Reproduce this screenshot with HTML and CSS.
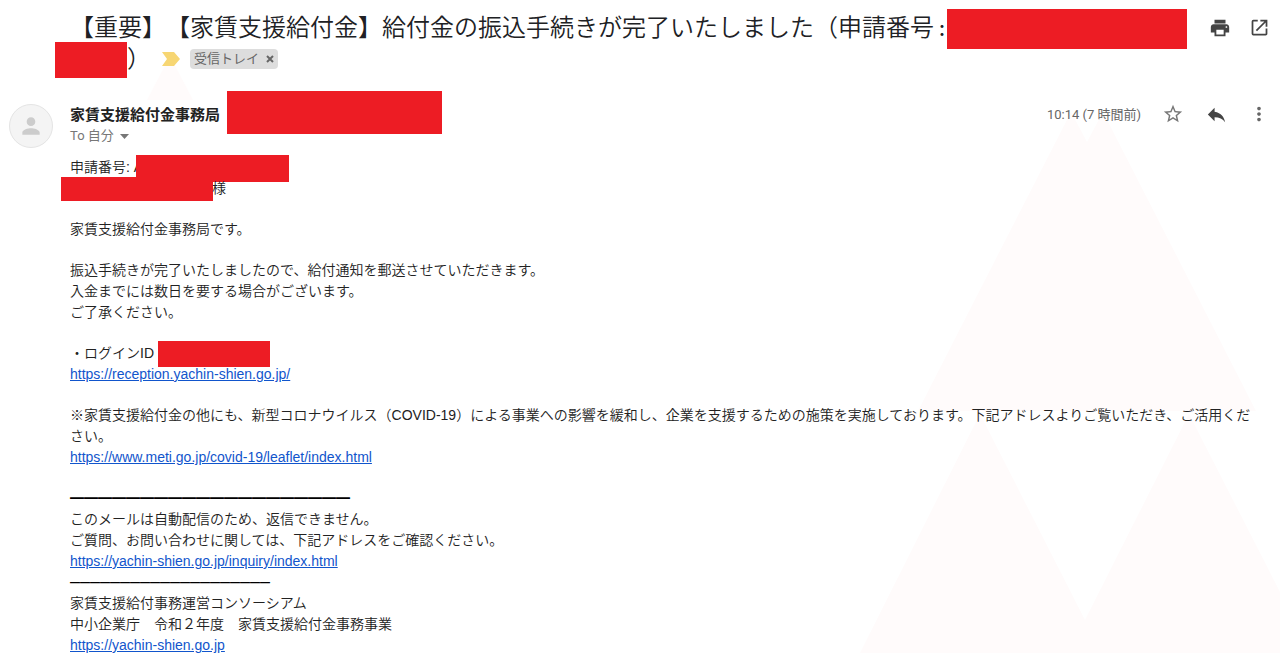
FILE: index.html
```html
<!DOCTYPE html>
<html lang="ja">
<head>
<meta charset="utf-8">
<meta name="viewport" content="width=device-width, initial-scale=1">
<title>【重要】【家賃支援給付金】給付金の振込手続きが完了いたしました</title>
<link rel="stylesheet" href="styles.css">
</head>
<body>
<main class="mail">
  <svg class="watermark" width="420" height="541" viewBox="0 0 420 541" aria-hidden="true">
    <path d="M211 0l16 30 16-30 153 299H58zM120 302l105 206 104-206 91 178v61H0z"/>
  </svg>

  <header class="subject">
    <h1 class="subject-text">【重要】【家賃支援給付金】給付金の振込手続きが完了いたしました（申請番号<span class="colon">：</span><span class="mask mask-number"></span><br><span class="mask mask-number-end"></span>）</h1>
    <div class="labels">
      <span class="marker">
        <svg width="18" height="14" viewBox="0 0 18 14" aria-hidden="true"><path d="M0 0h12l6 7-6 7H0l5-7z"/></svg>
        <svg class="peak" width="46" height="44" viewBox="0 0 46 44" aria-hidden="true"><path d="M23 0l23 44H0z"/></svg>
      </span>
      <span class="chip"><a href="#inbox">受信トレイ</a><button type="button" aria-label="ラベルを削除"><svg width="8" height="8" viewBox="0 0 8 8"><path d="M1 1l6 6M7 1L1 7"/></svg></button></span>
    </div>
    <div class="tools">
      <button class="icon" type="button" aria-label="印刷"><svg width="22" height="22" viewBox="0 0 24 24"><path d="M19 8H5c-1.660 0-3 1.340-3 3v6h4v4h12v-4h4v-6c0-1.660-1.340-3-3-3zm-3 11H8v-5h8v5zm3-7c-.55 0-1-.45-1-1s.45-1 1-1 1 .45 1 1-.45 1-1 1zm-1-9H6v4h12V3z"/></svg></button>
      <button class="icon" type="button" aria-label="新しいウィンドウで開く"><svg width="21" height="21" viewBox="0 0 24 24"><path d="M19 19H5V5h5V3H5a2 2 0 0 0-2 2v14a2 2 0 0 0 2 2h14c1.100 0 2-.9 2-2v-6h-2v6zM13 3v2h4.590l-9.830 9.830 1.410 1.410L19 6.410V11h2V3h-8z"/></svg></button>
    </div>
  </header>

  <article class="message">
    <div class="avatar"><svg width="26" height="26" viewBox="0 0 24 24" aria-hidden="true"><path d="M12 12c2.210 0 4-1.790 4-4s-1.790-4-4-4-4 1.790-4 4 1.790 4 4 4zm0 2c-2.670 0-8 1.340-8 4v2h16v-2c0-2.660-5.330-4-8-4z"/></svg></div>
    <div class="content">
      <div class="sender-row">
        <h2 class="sender">家賃支援給付金事務局</h2>
        <span class="mask mask-address"></span>
        <time class="time">10:14 (7 時間前)</time>
        <div class="tools">
          <button class="icon star" type="button" aria-label="スター"><svg width="22" height="22" viewBox="0 0 24 24"><path d="M22 9.240l-7.190-.62L12 2 9.190 8.630 2 9.240l5.460 4.730L5.820 21 12 17.270 18.180 21l-1.630-7.030L22 9.240zM12 15.400l-3.760 2.270 1-4.280-3.320-2.880 4.380-.38L12 6.100l1.710 4.040 4.380.38-3.320 2.880 1 4.280L12 15.400z"/></svg></button>
          <button class="icon" type="button" aria-label="返信"><svg width="23" height="23" viewBox="0 0 24 24"><path d="M10 9V5l-7 7 7 7v-4.100c5 0 8.500 1.600 11 5.100-1-5-4-10-11-11z"/></svg></button>
          <button class="icon more" type="button" aria-label="その他"><svg width="22" height="22" viewBox="0 0 24 24"><path d="M12 8c1.100 0 2-.9 2-2s-.9-2-2-2-2 .9-2 2 .9 2 2 2zm0 2c-1.100 0-2 .9-2 2s.9 2 2 2 2-.9 2-2-.9-2-2-2zm0 6c-1.100 0-2 .9-2 2s.9 2 2 2 2-.9 2-2-.9-2-2-2z"/></svg></button>
        </div>
      </div>
      <button class="recipient" type="button">To 自分<svg width="9" height="5" viewBox="0 0 9 5" aria-hidden="true"><path d="M0 0h9L4.500 5z"/></svg></button>

      <div class="body">
        <p>申請番号: A<span class="mask mask-id"></span><br><span class="mask mask-name"></span>様</p>
        <p>家賃支援給付金事務局です。</p>
        <p>振込手続きが完了いたしましたので、給付通知を郵送させていただきます。<br>入金までには数日を要する場合がございます。<br>ご了承ください。</p>
        <p>・ログインID <span class="mask mask-login"></span><br><a href="https://reception.yachin-shien.go.jp/">https://reception.yachin-shien.go.jp/</a></p>
        <p>※家賃支援給付金の他にも、新型コロナウイルス（COVID-19）による事業への影響を緩和し、企業を支援するための施策を実施しております。下記アドレスよりご覧いただき、ご活用ください。<br><a href="https://www.meti.go.jp/covid-19/leaflet/index.html">https://www.meti.go.jp/covid-19/leaflet/index.html</a></p>
        <p><span class="rule">━━━━━━━━━━━━━━━━━━━━</span><br>このメールは自動配信のため、返信できません。<br>ご質問、お問い合わせに関しては、下記アドレスをご確認ください。<br><a href="https://yachin-shien.go.jp/inquiry/index.html">https://yachin-shien.go.jp/inquiry/index.html</a><br><span class="rule rule-short">━━━━━━━━━━━━━━━━━━━━</span><br>家賃支援給付事務運営コンソーシアム<br>中小企業庁　令和２年度　家賃支援給付金事務事業<br><a href="https://yachin-shien.go.jp">https://yachin-shien.go.jp</a></p>
      </div>
    </div>
  </article>
</main>
</body>
</html>
```

FILE: styles.css
```css
* {
  box-sizing: border-box;
}

body {
  margin: 0;
  background: #fff;
  color: #222;
  font-family: "Liberation Sans", "Noto Sans CJK JP", sans-serif;
  font-size: 14px;
  line-height: 21px;
  text-spacing-trim: space-all;
}

h1,
h2,
p {
  margin: 0;
}

button {
  padding: 0;
  border: 0;
  background: none;
  color: inherit;
  font: inherit;
  cursor: pointer;
}

svg {
  display: block;
  fill: currentColor;
}

.mail {
  position: relative;
  overflow: hidden;
  padding: 12px 10px 0;
}

.watermark {
  position: absolute;
  z-index: -1;
  top: 112px;
  right: 0;
  color: #fffbfb;
}

.mask {
  display: inline-block;
  flex: none;
  vertical-align: middle;
  background: #ed1c24;
}

/* Subject */
.subject {
  display: grid;
  grid-template-columns: auto 1fr auto;
  grid-template-rows: 31px 31px;
  padding-left: 60px;
}

.subject-text {
  grid-area: 1 / 1 / 3 / 3;
  margin-top: -2px;
  color: #202124;
  font-family: "Noto Sans CJK JP", sans-serif;
  font-size: 24px;
  font-weight: 350;
  line-height: 31px;
}

.colon {
  font-size: 16px;
  font-weight: 700;
  line-height: 16px;
}

.mask-number {
  width: 240px;
  height: 40px;
  margin: -12px 0 -12px -3px;
}

.mask-number-end {
  width: 72px;
  height: 36px;
  margin: -10px 0 -10px -15px;
}

.labels {
  grid-area: 2 / 1 / 3 / 3;
  display: flex;
  align-items: center;
  gap: 10px;
  height: 31px;
  margin-left: 92px;
}

.marker {
  position: relative;
  color: #f7d673;
}

.peak {
  position: absolute;
  z-index: -1;
  top: 4px;
  left: -15px;
  color: #fffbfb;
}

.chip {
  display: flex;
  align-items: center;
  gap: 7px;
  height: 20px;
  padding: 0 4px;
  border-radius: 4px;
  background: #ddd;
  color: #666;
  font-size: 13px;
  line-height: 20px;
}

.chip a {
  color: inherit;
  text-decoration: none;
}

.chip path {
  fill: none;
  stroke: currentColor;
  stroke-width: 2;
}

.tools {
  display: flex;
  flex: none;
  gap: 19px;
}

.subject .tools {
  grid-area: 1 / 3 / 2 / 4;
  gap: 15px;
  height: 31px;
}

.icon {
  display: grid;
  place-items: center;
  width: 24px;
  color: #444;
}

.tools .icon:last-child {
  margin-right: -1px;
}

.star {
  color: #777;
}

.more {
  color: #666;
}

/* Message */
.message {
  display: flex;
  gap: 17px;
  padding-top: 28px;
}

.avatar {
  display: grid;
  flex: none;
  place-items: center;
  width: 44px;
  height: 44px;
  margin: 2px 0 0 -1px;
  border: 1px solid #e4e4e4;
  border-radius: 50%;
  background: #f4f4f4;
  color: #ccc;
}

.content {
  flex: 1;
  min-width: 0;
}

.sender-row {
  display: flex;
  align-items: center;
  height: 24px;
}

.sender {
  font-family: "Noto Sans CJK JP", sans-serif;
  font-size: 15px;
  line-height: 24px;
}

.mask-address {
  width: 215px;
  height: 43px;
  margin: 0 auto 4px 7px;
}

.time {
  margin-right: 20px;
  color: #666;
  font-family: Roboto, "Noto Sans CJK JP", sans-serif;
  font-size: 13px;
}

.recipient {
  display: flex;
  align-items: center;
  gap: 6px;
  color: #777;
  font-family: Roboto, "Noto Sans CJK JP", sans-serif;
  font-size: 13px;
  line-height: 20px;
}

.body {
  display: grid;
  gap: 20px;
  padding: 11px 8px 0 0;
  font-weight: 350;
}

.body a {
  color: #15c;
}

.mask-id {
  width: 153px;
  height: 27px;
  margin: -8px 0 -8px -7px;
}

.mask-name {
  width: 152px;
  height: 24px;
  margin: -8px -1px -8px -9px;
}

.mask-login {
  width: 112px;
  height: 26px;
  margin: -8px 0;
}

.rule {
  color: #000;
}

.rule-short {
  font-size: 10px;
  line-height: 10px;
}
```
